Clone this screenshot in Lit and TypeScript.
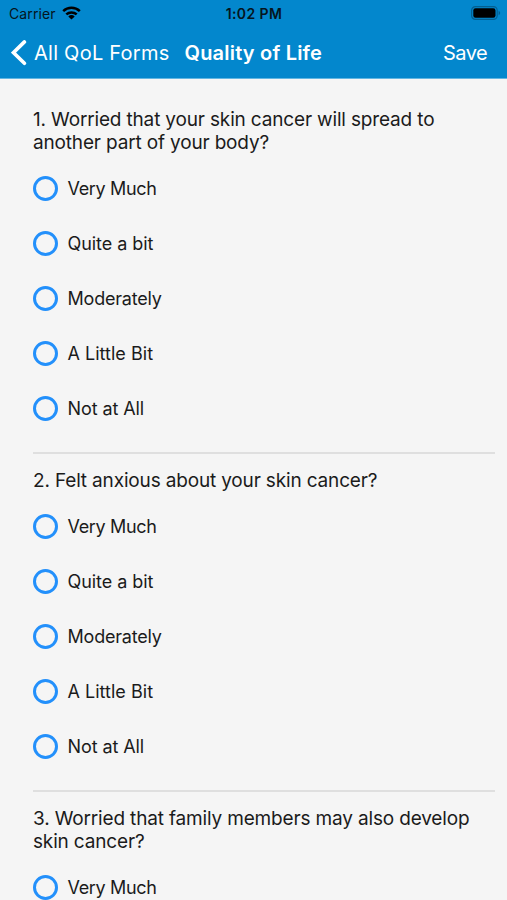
import { LitElement, html, css } from "lit";
import { customElement, property } from "lit/decorators.js";

interface Answer {
  label: string;
  tracking: number;
}

const ANSWERS: Answer[] = [
  { label: "Very Much", tracking: -0.34 },
  { label: "Quite a bit", tracking: -0.06 },
  { label: "Moderately", tracking: -0.2 },
  { label: "A Little Bit", tracking: 0.02 },
  { label: "Not at All", tracking: -0.1 },
];

const QUESTIONS: string[][] = [
  ["1. Worried that your skin cancer will spread to", "another part of your body?"],
  ["2. Felt anxious about your skin cancer?"],
  ["3. Worried that family members may also develop", "skin cancer?"],
];

@customElement("status-bar")
export class StatusBar extends LitElement {
  static styles = css`
    :host {
      display: grid;
      grid-template-columns: 1fr auto 1fr;
      align-items: center;
      height: 27px;
      padding: 0 6px 0 9px;
      color: #051520;
      font-size: 14px;
      line-height: 27px;
    }
    .carrier {
      display: flex;
      align-items: center;
      gap: 6px;
      letter-spacing: 0.1px;
    }
    .carrier svg {
      margin-top: -1px;
    }
    .time {
      font-weight: 600;
      letter-spacing: 0.4px;
      margin-right: 2px;
    }
    .battery {
      justify-self: end;
      margin-top: -1px;
    }
    svg {
      display: block;
    }
  `;
  render() {
    return html`
      <div class="carrier">
        <span>Carrier</span>
        <svg width="19" height="14" viewBox="0 0 19 14" fill="none" stroke="#000" stroke-width="2.5">
          <path d="M1.2 5.1C5.8 .7 13.2 .7 17.8 5.1" />
          <path d="M4.3 8.4C7.2 5.7 11.8 5.7 14.7 8.4" />
          <path d="M9.5 13.6L6.3 10.4Q9.5 7.8 12.7 10.4Z" fill="#000" stroke="none" />
        </svg>
      </div>
      <div class="time">1:02 PM</div>
      <svg class="battery" width="30" height="14" viewBox="0 0 30 14">
        <rect x="0.6" y="0.6" width="25.6" height="12.8" rx="3.8" fill="none" stroke="#035f91" stroke-width="1.2" />
        <rect x="2.3" y="2.3" width="22.2" height="9.4" rx="2.2" fill="#000" />
        <path d="M27.6 4.8Q29.2 5.5 29.2 7Q29.2 8.5 27.6 9.2Z" fill="#035f91" />
      </svg>
    `;
  }
}

@customElement("nav-bar")
export class NavBar extends LitElement {
  static styles = css`
    :host {
      display: flex;
      align-items: center;
      height: 51px;
      padding: 0 20px 0 11px;
      color: #fff;
      font-size: 20px;
      border-bottom: 1px solid #62b6e2;
    }
    svg {
      display: block;
      margin-right: 7px;
    }
    .back {
      letter-spacing: 0.25px;
    }
    .title {
      margin-left: 15px;
      font-weight: 600;
      letter-spacing: 0.2px;
    }
    .save {
      margin-left: auto;
      letter-spacing: -0.6px;
    }
  `;
  render() {
    return html`
      <svg width="16" height="26" viewBox="0 0 16 26" fill="none" stroke="#fff" stroke-width="3.6">
        <path d="M13.4 1.9L2.4 12.6L13.4 23.3" stroke-linecap="round" />
      </svg>
      <span class="back">All QoL Forms</span>
      <span class="title">Quality of Life</span>
      <span class="save">Save</span>
    `;
  }
}

@customElement("form-question")
export class FormQuestion extends LitElement {
  @property({ attribute: false }) lines: string[] = [];
  static styles = css`
    :host {
      display: block;
      margin: 0 12px 0 33px;
      padding: 15px 0 16px;
      border-bottom: 2px solid #dfdfdf;
    }
    .prompt {
      font-size: 19px;
      line-height: 23px;
      margin-bottom: 7px;
      white-space: nowrap;
      letter-spacing: -0.16px;
    }
    .option {
      display: flex;
      align-items: center;
      gap: 9.5px;
      height: 55px;
      font-size: 18px;
    }
    .radio {
      box-sizing: border-box;
      width: 25px;
      height: 25px;
      border: 3px solid #2390fb;
      border-radius: 50%;
    }
  `;
  render() {
    return html`
      <div class="prompt">${this.lines.map((l) => html`<div>${l}</div>`)}</div>
      ${ANSWERS.map(
        (a) => html`<div class="option">
          <span class="radio"></span><span style="letter-spacing:${a.tracking}px">${a.label}</span>
        </div>`
      )}
    `;
  }
}

@customElement("app-root")
export class AppRoot extends LitElement {
  static styles = css`
    :host {
      display: block;
      height: 900px;
      overflow: hidden;
      background: #f5f5f5;
      color: #1b1b1b;
      font-family: Inter, "Liberation Sans", sans-serif;
    }
    header {
      background: #0387cd;
    }
    main {
      padding-top: 14px;
    }
  `;
  render() {
    return html`
      <header>
        <status-bar></status-bar>
        <nav-bar></nav-bar>
      </header>
      <main>${QUESTIONS.map((q) => html`<form-question .lines=${q}></form-question>`)}</main>
    `;
  }
}
